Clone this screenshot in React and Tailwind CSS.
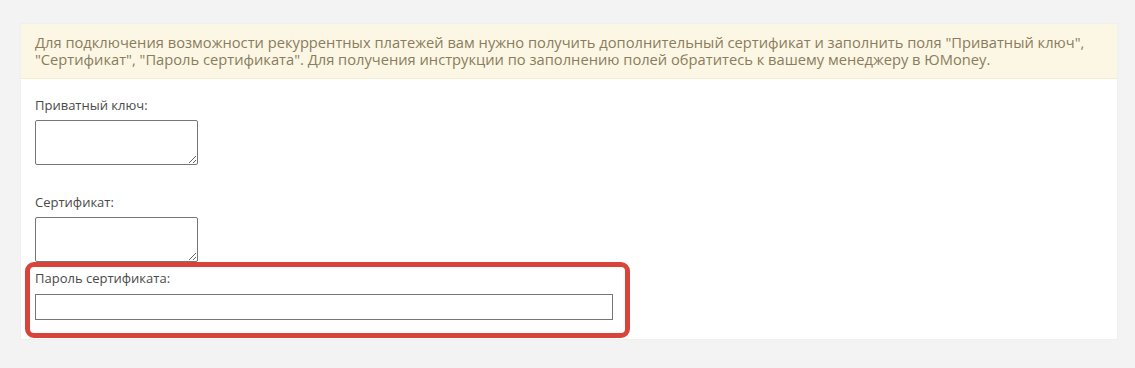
import React from 'react'

const FONT = { fontFamily: '"Open Sans", "Liberation Sans", sans-serif' }

function Field({ label, children, className = '' }) {
  return (
    <div className={className}>
      <label className="block text-[13px] leading-[17px] text-[#4a4a4a]">{label}</label>
      {children}
    </div>
  )
}

export default function App() {
  return (
    <div className="w-[1135px] h-[368px] bg-[#f3f3f3] pt-[23px] pl-[20px] pr-[17px]" style={FONT}>
      <div className="relative bg-white border border-[#f0efec] h-[317px]">
        {/* notice */}
        <div className="bg-[#fcf7e4] border-b border-[#f3ead0] px-[14px] py-[10px] text-[14.7px] leading-[17px] text-[#8a7c5c]">
          Для подключения возможности рекуррентных платежей вам нужно получить дополнительный сертификат и заполнить поля "Приватный ключ",
          "Сертификат", "Пароль сертификата". Для получения инструкции по заполнению полей обратитесь к вашему менеджеру в ЮMoney.
        </div>

        <div className="px-[14px]">
          <Field label="Приватный ключ:" className="mt-[18px]">
            <textarea className="block mt-[6px] w-[163px] h-[45px] border border-[#767676] rounded-[2px] bg-white" />
          </Field>

          <Field label="Сертификат:" className="mt-[29px]">
            <textarea className="block mt-[6px] w-[163px] h-[45px] border border-[#767676] rounded-[2px] bg-white" />
          </Field>

          <Field label="Пароль сертификата:" className="mt-[8px]">
            <input type="text" className="block mt-[7px] w-[578px] h-[26px] border border-[#767676] bg-white" />
          </Field>
        </div>

        {/* highlight annotation */}
        <div className="absolute left-[4px] top-[238px] w-[605px] h-[76px] border-[5px] border-[#d9443a] rounded-[9px] pointer-events-none" />
      </div>
    </div>
  )
}
